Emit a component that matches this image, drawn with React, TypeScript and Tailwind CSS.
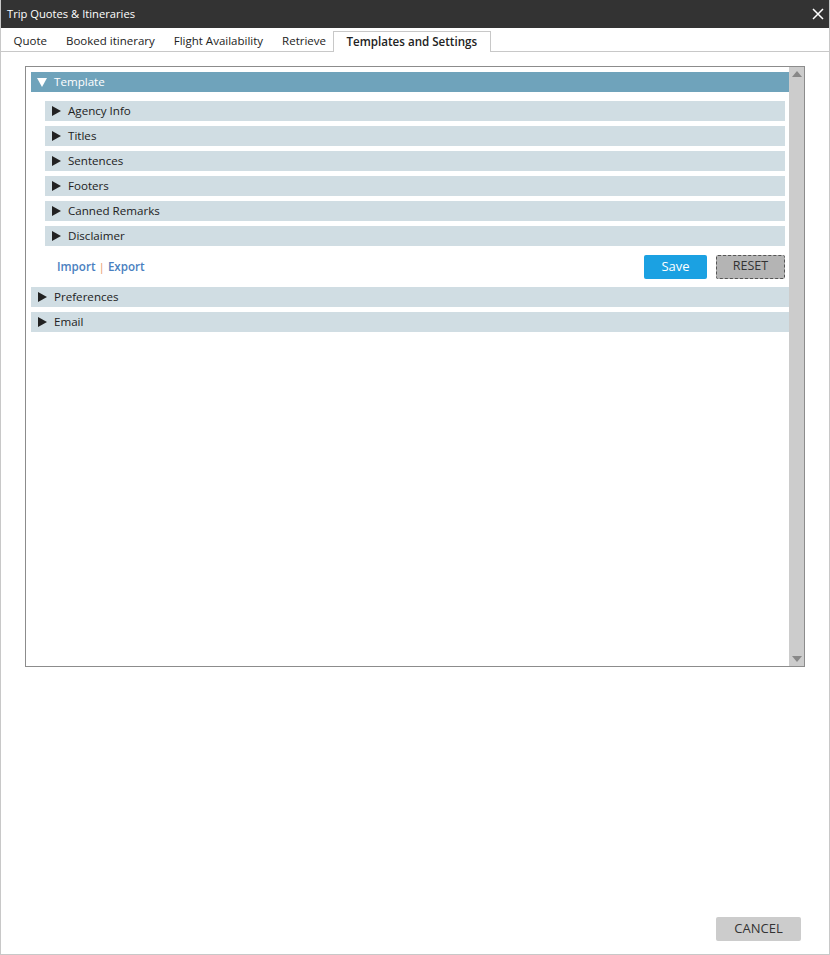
import React from 'react'

const font = { fontFamily: '"Segoe UI", "Open Sans", "Noto Sans", sans-serif' }

function Caret({ open, white }: { open?: boolean; white?: boolean }) {
  const fill = white ? '#ffffff' : '#222222'
  return open ? (
    <svg width="10" height="10" viewBox="0 0 10 10" className="shrink-0">
      <polygon points="0,1 10,1 5,10" fill={fill} />
    </svg>
  ) : (
    <svg width="10" height="10" viewBox="0 0 10 10" className="shrink-0">
      <polygon points="1,0 10,5 1,10" fill={fill} />
    </svg>
  )
}

function Row({ label, indent }: { label: string; indent?: boolean }) {
  return (
    <div
      className={`h-[20px] bg-[#d0dde3] flex items-center gap-[7px] text-[11.6px] text-[#222] pl-[6px] ${
        indent ? 'ml-[14px] mr-[4px]' : ''
      }`}
    >
      <Caret />
      <span>{label}</span>
    </div>
  )
}

const tabs = ['Quote', 'Booked itinerary', 'Flight Availability', 'Retrieve']
const subs = ['Agency Info', 'Titles', 'Sentences', 'Footers', 'Canned Remarks', 'Disclaimer']

export default function App() {
  return (
    <div style={font} className="w-[830px] h-[955px] flex flex-col bg-white border-l border-r border-b border-[#c8c8c8] text-[#222]">
      {/* title bar */}
      <div className="h-[28px] bg-[#333333] flex items-center justify-between pl-[6px] pr-[4px] text-white text-[11.2px] shrink-0">
        <span>Trip Quotes &amp; Itineraries</span>
        <svg width="12" height="12" viewBox="0 0 12 12" className="mr-[1px]">
          <path d="M1 1 L11 11 M11 1 L1 11" stroke="#fff" strokeWidth="1.5" />
        </svg>
      </div>

      {/* tabs */}
      <div className="h-[24px] flex items-end border-b border-[#c8c8c8] pl-[3px] text-[11.5px] shrink-0">
        {tabs.map((t) => (
          <div key={t} className="h-[21px] px-[9.5px] flex items-center">
            {t}
          </div>
        ))}
        <div className="h-[21px] ml-[-3px] px-[13px] flex items-center text-[11.6px] font-semibold border border-b-0 border-[#c8c8c8] bg-white mb-[-1px] pb-[1px]">
          Templates and Settings
        </div>
      </div>

      {/* content */}
      <div className="flex-1 flex flex-col px-[24px] pt-[14px]">
        <div className="h-[601px] border border-[#8c8c8c] flex">
          <div className="flex-1 pl-[5px] pt-[5px] flex flex-col">
            <div className="h-[20px] bg-[#6fa3bb] flex items-center gap-[7px] pl-[6px] text-white text-[11.6px]">
              <Caret open white />
              <span>Template</span>
            </div>
            <div className="flex flex-col gap-[5px] mt-[9px]">
              {subs.map((s) => (
                <Row key={s} label={s} indent />
              ))}
            </div>
            <div className="h-[41px] flex items-center justify-between pl-[26px] pr-[4px]">
              <div className="text-[11.6px] font-semibold text-[#4a7fc0] mt-[1px]">
                Import <span className="text-[#e8a070] font-normal">|</span> Export
              </div>
              <div className="flex items-center gap-[9px]">
                <button className="w-[63px] h-[24px] bg-[#1ba1e2] text-white text-[13px] rounded-[2px]">Save</button>
                <button className="w-[69px] h-[24px] bg-[#b4b4b4] text-[#333] text-[12.5px] rounded-[2px] border border-dashed border-[#555]">
                  RESET
                </button>
              </div>
            </div>
            <div className="flex flex-col gap-[5px]">
              <Row label="Preferences" />
              <Row label="Email" />
            </div>
          </div>
          <div className="w-[15px] bg-[#cccccc] flex flex-col items-center justify-between py-[4px]">
            <svg width="10" height="6" viewBox="0 0 10 6">
              <polygon points="0,6 10,6 5,0" fill="#888" />
            </svg>
            <svg width="10" height="6" viewBox="0 0 10 6">
              <polygon points="0,0 10,0 5,6" fill="#888" />
            </svg>
          </div>
        </div>
        <div className="flex-1" />
        <div className="flex justify-end pr-[4px] pb-[13px]">
          <button className="w-[85px] h-[24px] bg-[#cccccc] text-[#333] text-[13px] rounded-[2px]">CANCEL</button>
        </div>
      </div>
    </div>
  )
}
